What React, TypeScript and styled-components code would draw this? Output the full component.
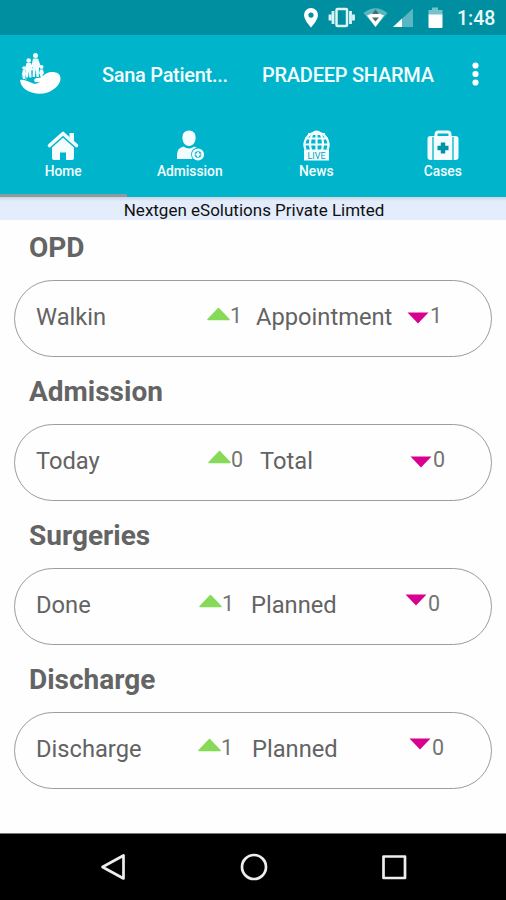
import React from "react";
import styled, { createGlobalStyle } from "styled-components";

const GlobalStyle = createGlobalStyle`
  * { box-sizing: border-box; }
  body { margin: 0; background: #fff; }
`;

const Screen = styled.div`
  width: 506px;
  height: 900px;
  display: flex;
  flex-direction: column;
  overflow: hidden;
  background: #fefefe;
  font-family: Roboto, sans-serif;
`;

const StatusBar = styled.header`
  height: 35px;
  flex: none;
  display: flex;
  justify-content: flex-end;
  background: #008fa0;
  color: #e9fbfd;
`;

const StatusIcons = styled.svg`
  width: 160px;
  height: 35px;
`;

const Clock = styled.time`
  width: 56px;
  padding-left: 7px;
  font-size: 19.5px;
  font-weight: 500;
  line-height: 37px;
  white-space: nowrap;
`;

const Toolbar = styled.div`
  height: 80px;
  flex: none;
  display: grid;
  grid-template-columns: 102px 160px 203px 1fr;
  align-items: center;
  background: #00b4cb;
  color: #f3fdff;
`;

const Logo = styled.svg`
  width: 44px;
  height: 46px;
  margin: 0 0 4px 18px;
`;

const BarText = styled.span<{ $spacing: number }>`
  font-size: 20px;
  font-weight: 500;
  line-height: 24px;
  letter-spacing: ${(p) => p.$spacing}px;
  white-space: nowrap;
`;

const More = styled.svg`
  width: 20px;
  height: 30px;
  margin-bottom: 3px;
`;

const Tabs = styled.nav`
  height: 82px;
  flex: none;
  display: grid;
  grid-template-columns: repeat(4, 1fr);
  background: #00b4cb;
`;

const Tab = styled.div<{ $active?: boolean }>`
  display: flex;
  flex-direction: column;
  align-items: center;
  padding-top: 12px;
  color: #f3fdff;
  border-bottom: ${(p) => (p.$active ? "3px solid #8b9ba3" : "0")};
`;

const TabIcon = styled.svg`
  width: 36px;
  height: 36px;
`;

const TabLabel = styled.span`
  font-size: 13.8px;
  font-weight: 500;
  line-height: 17px;
`;

const Banner = styled.div`
  height: 23px;
  flex: none;
  background: linear-gradient(#cbd5df 0, #e2ecfa 4px, #e4edfc 100%);
  color: #111;
  font-size: 17px;
  line-height: 26px;
  text-align: center;
  padding-left: 2px;
  white-space: nowrap;
`;

const Main = styled.main`
  flex: 1;
`;

const Section = styled.section`
  height: 144px;
`;

const Heading = styled.h2`
  height: 59.5px;
  margin: 0;
  padding: 11px 0 0 29px;
  color: #646464;
  font-size: 28px;
  font-weight: 700;
  line-height: 34px;
`;

const Card = styled.div<{ $cols: string }>`
  width: 478px;
  height: 77px;
  margin-left: 14px;
  padding: 0 0 2px 21px;
  display: grid;
  grid-template-columns: ${(p) => p.$cols};
  align-items: center;
  border: 1px solid #9c9c9c;
  border-radius: 39px;
  color: #636363;
`;

const Label = styled.span`
  font-size: 23.7px;
  line-height: 30px;
  white-space: nowrap;
`;

const Stat = styled.span`
  display: flex;
  align-items: center;
  height: 30px;
  margin-bottom: 2px;
`;

const Arrow = styled.svg<{ $shift: number }>`
  width: 23px;
  height: 14px;
  flex: none;
  margin-top: ${(p) => p.$shift}px;
`;

const Count = styled.span`
  font-size: 21.5px;
  line-height: 30px;
  color: #747474;
`;

const SystemNav = styled.footer`
  height: 67px;
  flex: none;
  display: flex;
  justify-content: space-between;
  align-items: center;
  padding: 0 96px 0 97px;
  background: #000;
  border-top: 1px solid #777;
`;

const NavIcon = styled.svg`
  width: 32px;
  height: 32px;
  fill: none;
  stroke: #eee;
  stroke-width: 2.7;
  stroke-linejoin: round;
`;

type Group = {
  title: string;
  cols: string;
  first: string;
  up: number;
  upShift: number;
  second: string;
  down: number;
  downShift: number;
};

const groups: Group[] = [
  { title: "OPD", cols: "171px 49px 151px 1fr", first: "Walkin", up: 1, upShift: -5, second: "Appointment", down: 1, downShift: 3 },
  { title: "Admission", cols: "172px 52px 150px 1fr", first: "Today", up: 0, upShift: -7, second: "Total", down: 0, downShift: 3 },
  { title: "Surgeries", cols: "163px 52px 154px 1fr", first: "Done", up: 1, upShift: -7, second: "Planned", down: 0, downShift: -9 },
  { title: "Discharge", cols: "162px 54px 157px 1fr", first: "Discharge", up: 1, upShift: -7, second: "Planned", down: 0, downShift: -9 },
];

const UpArrow = ({ shift }: { shift: number }) => (
  <Arrow $shift={shift} viewBox="0 0 23 14">
    <path d="M11.5 1.5 22 12.5H1Z" fill="#86da58" stroke="#86da58" strokeWidth="1.5" strokeLinejoin="round" />
  </Arrow>
);

const DownArrow = ({ shift }: { shift: number }) => (
  <Arrow $shift={shift} viewBox="0 0 23 14">
    <path d="M0.5 1.500H21.500L11 12.500Z" fill="#d9008f" />
  </Arrow>
);

const HomeIcon = () => (
  <TabIcon viewBox="0 0 36 36">
    <path d="M4.500 18.500 18 6.500 31.500 18.500" fill="none" stroke="currentColor" strokeWidth="3.600" strokeLinecap="round" strokeLinejoin="round" />
    <path d="M24.500 6h4.500v9l-4.500-4Z" fill="currentColor" />
    <path d="M18 10.800 29 20.500V31a2 2 0 0 1-2 2H21V25.500h-6v7.500H9a2 2 0 0 1-2-2V20.500Z" fill="currentColor" />
  </TabIcon>
);

const AdmissionIcon = () => (
  <TabIcon viewBox="0 0 36 36">
    <path d="M17 3.500c4.400 0 6.600 3 6.600 7.200c0 4-2.500 8.300-6.600 8.300s-6.600-4.300-6.600-8.300C10.400 6.500 12.600 3.500 17 3.500Z" fill="currentColor" />
    <path d="M5 32c0-6 .4-9.500 3.200-11l3.500-1.500c3 2.500 7.500 2.500 10.500 0l4 2-6 10.500Z" fill="currentColor" />
    <circle cx="26" cy="27.500" r="6.900" fill="#00b4cb" />
    <circle cx="26" cy="27.500" r="4.700" fill="#00b4cb" stroke="currentColor" strokeWidth="2.800" />
    <path d="M26 25v5M23.500 27.500h5" stroke="currentColor" strokeWidth="1.800" />
  </TabIcon>
);

const NewsIcon = () => (
  <TabIcon viewBox="0 0 36 36">
    <g fill="none" stroke="currentColor" strokeWidth="2.200">
      <path d="M7.500 22.500A12 12 0 1 1 29.500 22.500" />
      <ellipse cx="18.500" cy="16.500" rx="6.500" ry="12" />
      <path d="M18.500 4v19M7 11.500h23M6.500 17.500h24M10 7h17" />
    </g>
    <path d="M6 22.500h25v11H6Z" fill="currentColor" />
    <text x="18.500" y="31.500" textAnchor="middle" fontFamily="Roboto, sans-serif" fontSize="9" fill="#00a4ba">LIVE</text>
  </TabIcon>
);

const CasesIcon = () => (
  <TabIcon viewBox="0 0 36 36">
    <path d="M11 10V7.500a2.500 2.500 0 0 1 2.500-2.500h9A2.500 2.500 0 0 1 25 7.500V10" fill="none" stroke="currentColor" strokeWidth="3" />
    <rect x="2.500" y="9" width="31" height="24" rx="3" fill="currentColor" />
    <path d="M8 10v23M28 10v23" stroke="#00b4cb" strokeWidth="1.300" />
    <path d="M15.800 15.500h4.400v3.300h3.300v4.400h-3.300v3.300h-4.400v-3.300h-3.300v-4.400h3.300Z" fill="#0092a8" />
  </TabIcon>
);

const tabs = [
  { name: "Home", Icon: HomeIcon },
  { name: "Admission", Icon: AdmissionIcon },
  { name: "News", Icon: NewsIcon },
  { name: "Cases", Icon: CasesIcon },
];

export default function App() {
  return (
    <>
      <GlobalStyle />
      <Screen>
        <StatusBar>
          <StatusIcons viewBox="290 0 160 35">
            <path d="M311 8a7 7 0 0 0-7 7c0 5 7 12.500 7 12.500S318 20 318 15a7 7 0 0 0-7-7Zm0 4.500a2.600 2.600 0 1 1 0 5.200a2.600 2.600 0 0 1 0-5.200Z" fill="#fff" fillRule="evenodd" />
            <g fill="none" stroke="#dcf5f8" strokeWidth="2.500">
              <rect x="336.500" y="9" width="10.500" height="17" rx="1" />
              <path d="M333 11v13M350.500 11v13M330 14.500v6M353.500 14.500v6" strokeWidth="2.800" />
            </g>
            <path d="M363.500 13q12-9.500 24 0L375.500 27Z" fill="#58b7c2" />
            <path d="M367 15.500q8.500-5 17 0L375.500 27Z" fill="#fff" />
            <path d="M375.500 9.500l3.500 4.500h-7ZM375.500 21.500l-3.500-4h7Z" fill="#486b72" />
            <path d="M413 8.500V27H393Z" fill="#58b7c2" />
            <path d="M402 18.500V27H393Z" fill="#fff" />
            <path d="M428.500 10H432V7.500h6V10h4.500v5h-14Z" fill="#72c3cc" />
            <path d="M428.500 14.500h14V27a1 1 0 0 1-1 1h-12a1 1 0 0 1-1-1Z" fill="#fff" />
          </StatusIcons>
          <Clock>1:48</Clock>
        </StatusBar>

        <Toolbar>
          <Logo viewBox="18 50 44 46">
            <path d="M20 80c3-1 6 .3 9 1.700c4 1.900 7 3 11 .9l-5-.5c-2-2.500 0-4 3-4c5 0 6-6.100 14-6.100c5 0 8.500 2 8.500 6.500c0 6-6 11.500-13 14c-8 2.800-17 .5-22-3c-3.500-2.500-5-5.500-5.500-9.500Z" fill="#fff" />
            <g fill="#f0fcfd">
              <circle cx="28.700" cy="60.500" r="2.300" />
              <circle cx="35.500" cy="55.500" r="2.500" />
              <circle cx="24" cy="68" r="1.800" />
              <circle cx="41.500" cy="67" r="2" />
              <path d="M26.500 63h4.500l2 7-1.700.5.2 7H29.300l-.5-6-.8 6h-2.200l.2-7-1.500-.5ZM33 58.500h5l3 8.500-2 .5-.2 9.500h-2.300l-.8-8-.8 8h-2.300l.2-10-1.500-.5ZM22.800 70h2.500l1 5-1 .5V79h-2.500v-3.500l-1-.5ZM40 69.500h3l1 4-1 .5-.7 3h-1.800l-.8-3-.7-.5Z" />
            </g>
            <path d="M21.500 76l5 3.500" stroke="#d7f6f9" strokeWidth=".8" />
          </Logo>
          <BarText $spacing={-0.3}>Sana Patient...</BarText>
          <BarText $spacing={-0.25}>PRADEEP SHARMA</BarText>
          <More viewBox="0 0 20 30" fill="#fff">
            <circle cx="10.500" cy="6.500" r="3.100" />
            <circle cx="10.500" cy="15" r="3.100" />
            <circle cx="10.500" cy="23.500" r="3.100" />
          </More>
        </Toolbar>

        <Tabs>
          {tabs.map(({ name, Icon }, i) => (
            <Tab key={name} $active={i === 0}>
              <Icon />
              <TabLabel>{name}</TabLabel>
            </Tab>
          ))}
        </Tabs>

        <Banner>Nextgen eSolutions Private Limted</Banner>

        <Main>
          {groups.map((g) => (
            <Section key={g.title}>
              <Heading>{g.title}</Heading>
              <Card $cols={g.cols}>
                <Label>{g.first}</Label>
                <Stat>
                  <UpArrow shift={g.upShift} />
                  <Count>{g.up}</Count>
                </Stat>
                <Label>{g.second}</Label>
                <Stat>
                  <DownArrow shift={g.downShift} />
                  <Count>{g.down}</Count>
                </Stat>
              </Card>
            </Section>
          ))}
        </Main>

        <SystemNav>
          <NavIcon viewBox="0 0 32 32">
            <path d="M5.500 16 26.500 4.500v23Z" />
          </NavIcon>
          <NavIcon viewBox="0 0 32 32">
            <circle cx="16" cy="16" r="12" />
          </NavIcon>
          <NavIcon viewBox="0 0 32 32">
            <rect x="5.500" y="5.500" width="21.500" height="21.500" />
          </NavIcon>
        </SystemNav>
      </Screen>
    </>
  );
}
